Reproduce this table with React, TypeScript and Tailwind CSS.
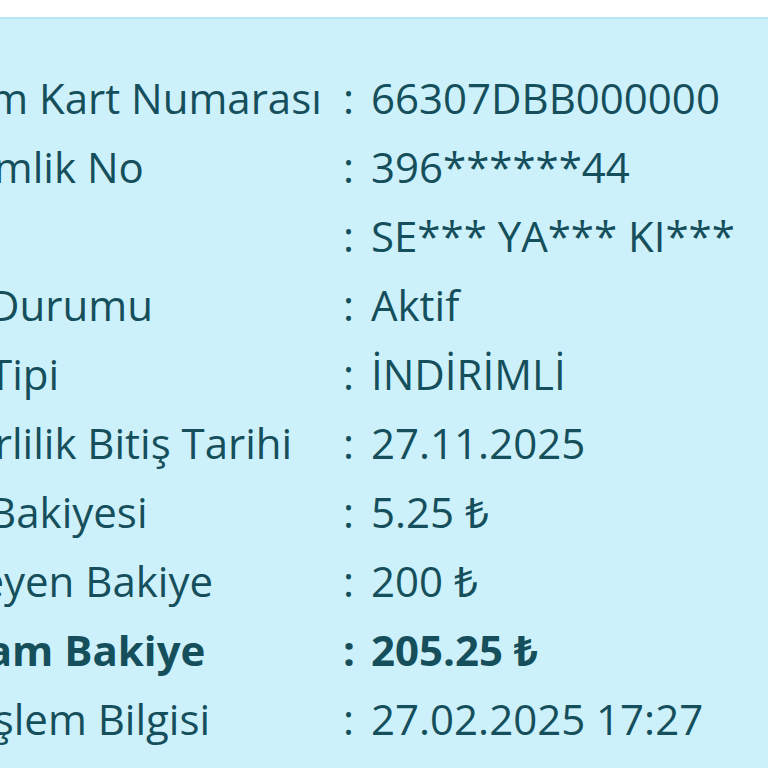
import React from 'react';

interface InfoRow {
  label: string;
  value: string;
  bold?: boolean;
}

const rows: InfoRow[] = [
  { label: 'Sistem Kart Numarası', value: '66307DBB000000' },
  { label: 'TC Kimlik No', value: '396******44' },
  { label: 'Ad', value: 'SE*** YA*** KI***' },
  { label: 'Kart Durumu', value: 'Aktif' },
  { label: 'Kart Tipi', value: 'İNDİRİMLİ' },
  { label: 'Geçerlilik Bitiş Tarihi', value: '27.11.2025' },
  { label: 'Kart Bakiyesi', value: '5.25 ₺' },
  { label: 'Bekleyen Bakiye', value: '200 ₺' },
  { label: 'Toplam Bakiye', value: '205.25 ₺', bold: true },
  { label: 'Son İşlem Bilgisi', value: '27.02.2025 17:27' },
];

const App: React.FC = () => {
  return (
    <div className="w-[768px] h-[768px] overflow-hidden bg-white pt-[17px] font-['Open_Sans',_'Noto_Sans',_sans-serif]">
      <div className="h-full border-t-2 border-[#b4e6f3] bg-[#cdf1fa] pt-[44px]">
        <div className="-ml-[103px] text-[42px] text-[#154f5c]">
          {rows.map((row) => (
            <div
              key={row.label}
              className={`flex h-[69px] items-center whitespace-nowrap ${row.bold ? 'font-bold' : ''}`}
            >
              <span className="w-[446px] shrink-0">{row.label}</span>
              <span className="w-[28px] shrink-0">:</span>
              <span>{row.value}</span>
            </div>
          ))}
        </div>
      </div>
    </div>
  );
};

export default App;
